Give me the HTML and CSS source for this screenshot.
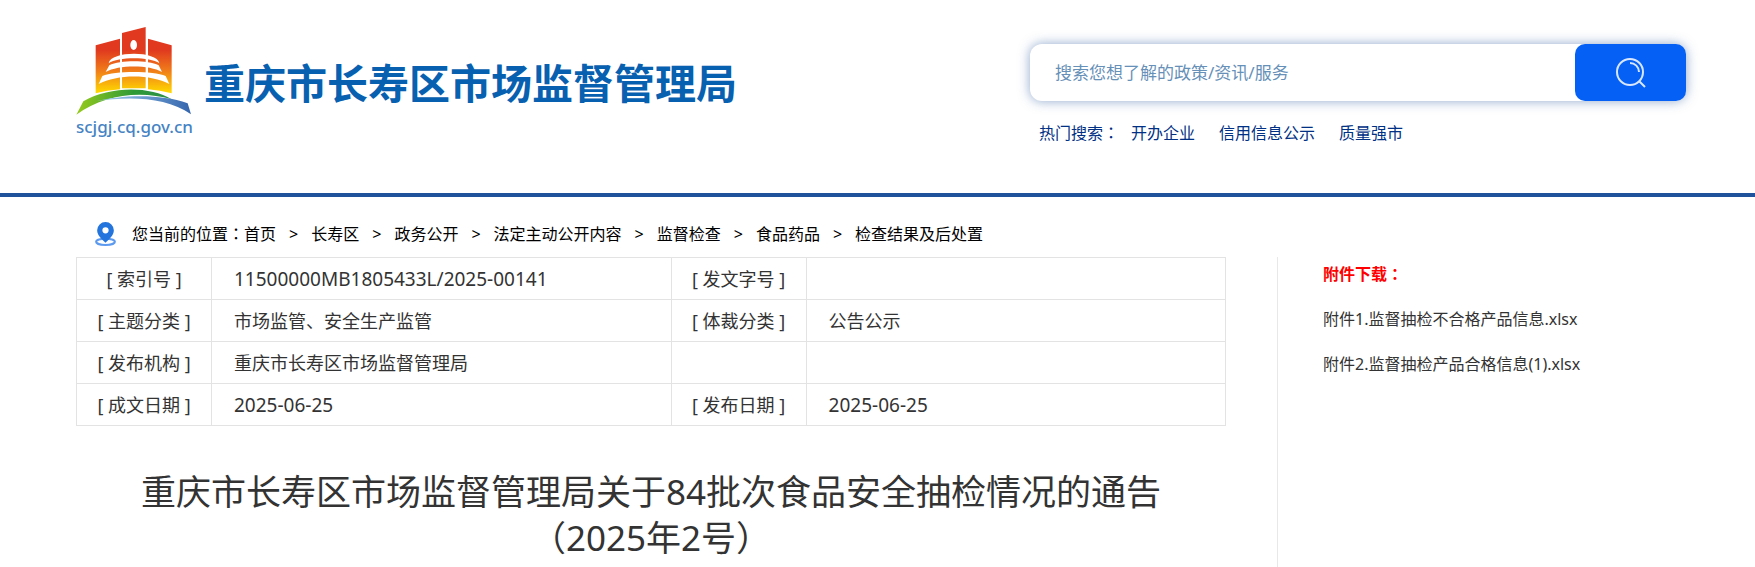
FILE: index.html
```html
<!DOCTYPE html>
<html lang="zh-CN">

<head>
  <meta charset="UTF-8" />
  <meta name="viewport" content="width=device-width, initial-scale=1.0" />
  <title>重庆市长寿区市场监督管理局</title>
  <link rel="stylesheet" href="styles.css">
</head>

<body>
  <!-- Header -->
  <header class="header">
    <a class="brand" href="#">
      <span class="brand-mark">
        <svg class="logo" viewBox="48 45 348 276" aria-hidden="true">
          <defs>
            <linearGradient id="tower" gradientUnits="userSpaceOnUse" x1="0" y1="50" x2="0" y2="250">
              <stop offset="0.35" stop-color="#e0391f" />
              <stop offset="0.65" stop-color="#f07a1a" />
              <stop offset="1" stop-color="#ffdc00" />
            </linearGradient>
            <linearGradient id="hill" x1="0" y1="0" x2="1" y2="0">
              <stop offset="0" stop-color="#97cb1c" />
              <stop offset="0.6" stop-color="#2f9a35" />
              <stop offset="1" stop-color="#2a8f4a" />
            </linearGradient>
            <linearGradient id="river" x1="0" y1="0" x2="1" y2="0">
              <stop offset="0" stop-color="#a5d3ee" />
              <stop offset="1" stop-color="#3465ae" />
            </linearGradient>
          </defs>
          <path fill="url(#tower)" d="M107 106L180 86V238Q140 241 107 250ZM186 69L257 51V235H186ZM264 86L335 106V250Q300 241 264 238Z" />
          <ellipse cx="221" cy="105" rx="10" ry="15" fill="#fff" />
          <g fill="#fff">
            <path d="M146 160C152 122 292 122 298 160C270 140 174 140 146 160Z" />
            <path d="M137 186L148 166C180 150 264 150 296 166L306 186C268 164 176 164 137 186Z" />
            <path d="M116 222L127 198C165 182 279 182 317 198L328 222C272 192 172 192 116 222Z" />
          </g>
          <path fill="url(#hill)" d="M49 314L70 274C150 228 270 228 335 268C240 240 130 254 49 314Z" />
          <path fill="url(#river)" d="M108 274C180 256 300 250 383 280L393 313C320 262 210 258 108 274Z" />
        </svg>
        <span class="domain">scjgj.cq.gov.cn</span>
      </span>
      <span class="brand-name">重庆市长寿区市场监督管理局</span>
    </a>

    <div class="search">
      <form class="search-box">
        <input type="text" class="search-input" aria-label="搜索" placeholder="搜索您想了解的政策/资讯/服务" />
        <button type="button" class="search-btn" aria-label="搜索">
          <svg viewBox="0 0 30 30" aria-hidden="true">
            <circle cx="14" cy="14" r="13" />
            <path d="M14 5a9 9 0 0 1 9 9M23 23l6 6" />
          </svg>
        </button>
      </form>
      <div class="hot">
        <span class="hot-label">热门搜索<span lang="zh-TW">：</span></span>
        <a href="#">开办企业</a>
        <a href="#">信用信息公示</a>
        <a href="#">质量强市</a>
      </div>
    </div>
  </header>

  <!-- Breadcrumb -->
  <nav class="crumbs">
    <svg class="pin" viewBox="0 0 20 23" aria-hidden="true">
      <ellipse cx="10" cy="19" rx="9" ry="3" />
      <path d="M10 0a8 8 0 0 1 8 8c0 5-5 9-8 12c-3-3-8-7-8-12a8 8 0 0 1 8-8zM10 5a3 3 0 0 0 0 6a3 3 0 0 0 0-6z" />
    </svg>
    <span>您当前的位置<span lang="zh-TW">：</span></span>
    <ol>
      <li><a href="#">首页</a></li>
      <li><a href="#">长寿区</a></li>
      <li><a href="#">政务公开</a></li>
      <li><a href="#">法定主动公开内容</a></li>
      <li><a href="#">监督检查</a></li>
      <li><a href="#">食品药品</a></li>
      <li><a href="#">检查结果及后处置</a></li>
    </ol>
  </nav>

  <div class="content">
    <main class="article">
      <table class="info">
        <colgroup>
          <col class="col-label">
          <col class="col-value">
          <col class="col-label">
          <col>
        </colgroup>
        <tr>
          <th>[ 索引号 ]</th>
          <td class="num">11500000MB1805433L/2025-00141</td>
          <th>[ 发文字号 ]</th>
          <td></td>
        </tr>
        <tr>
          <th>[ 主题分类 ]</th>
          <td>市场监管、安全生产监管</td>
          <th>[ 体裁分类 ]</th>
          <td>公告公示</td>
        </tr>
        <tr>
          <th>[ 发布机构 ]</th>
          <td>重庆市长寿区市场监督管理局</td>
          <th></th>
          <td></td>
        </tr>
        <tr>
          <th>[ 成文日期 ]</th>
          <td class="num">2025-06-25</td>
          <th>[ 发布日期 ]</th>
          <td class="num">2025-06-25</td>
        </tr>
      </table>
      <h1>重庆市长寿区市场监督管理局关于84批次食品安全抽检情况的通告<br>（2025年2号）</h1>
    </main>

    <!-- Attachments -->
    <aside class="files">
      <h2>附件下载<span lang="zh-TW">：</span></h2>
      <ul>
        <li><a href="#">附件1.监督抽检不合格产品信息.xlsx</a></li>
        <li><a href="#">附件2.监督抽检产品合格信息(1).xlsx</a></li>
      </ul>
    </aside>
  </div>
</body>

</html>
```
FILE: styles.css
```css
* {
  margin: 0;
  padding: 0;
  box-sizing: border-box;
}

body {
  min-height: 100vh;
  display: flex;
  flex-direction: column;
  background: #fff;
  color: #333;
  font-family: "Noto Sans", "Noto Sans CJK SC", sans-serif;
  font-size: 16px;
}

a {
  color: inherit;
  text-decoration: none;
}

ol,
ul {
  list-style: none;
}

/* Header */
.header {
  display: flex;
  justify-content: space-between;
  align-items: flex-start;
  padding: 25px 69px 48px 76px;
  border-bottom: 4px solid #20529c;
}

.brand {
  display: flex;
  align-items: center;
  gap: 10px;
}

.brand-mark {
  display: flex;
  flex-direction: column;
  width: 118px;
}

.logo {
  width: 116px;
  height: 92px;
}

.domain {
  color: #4583c4;
  font-size: 17px;
  font-weight: 500;
  line-height: 20px;
  white-space: nowrap;
}

.brand-name {
  padding-top: 4px;
  color: #0860b0;
  font-size: 41px;
  font-weight: 700;
  line-height: 60px;
  white-space: nowrap;
}

/* Search */
.search {
  width: 656px;
  padding-top: 19px;
}

.search-box {
  display: flex;
  height: 57px;
  border-radius: 12px;
  background: #fff;
  box-shadow: 0 0 12px rgba(32, 82, 156, 0.5);
}

.search-input {
  flex: 1;
  padding: 0 25px;
  border: none;
  border-radius: 12px;
  outline: none;
  background: transparent;
  font-family: inherit;
  font-size: 17px;
}

.search-input::placeholder {
  color: #6690b8;
}

.search-btn {
  width: 111px;
  border: none;
  border-radius: 10px;
  background: #0561f5;
  cursor: pointer;
}

.search-btn svg {
  width: 30px;
  height: 30px;
  vertical-align: middle;
  fill: none;
  stroke: #d8e6ff;
  stroke-width: 2;
}

.hot {
  display: flex;
  gap: 24px;
  padding: 20px 9px 0;
  color: #003084;
  line-height: 24px;
}

.hot-label {
  margin-right: -12px;
}

/* Breadcrumb */
.crumbs {
  display: flex;
  align-items: center;
  padding: 22px 95px 8px;
  color: #000;
  line-height: 30px;
}

.crumbs ol {
  display: flex;
}

.crumbs li + li::before {
  content: ">";
  margin: 0 13px;
}

.pin {
  width: 21px;
  height: 24px;
  margin-right: 16px;
}

.pin path {
  fill: #2374dd;
  fill-rule: evenodd;
}

.pin ellipse {
  fill: none;
  stroke: #5c9af0;
  stroke-width: 2;
}

/* Content */
.content {
  flex: 1;
  display: grid;
  grid-template-columns: 1150fr 402fr;
  gap: 51px;
  padding: 0 76px;
}

.info {
  width: 100%;
  table-layout: fixed;
  border-collapse: collapse;
  font-size: 18px;
}

.col-label {
  width: 135px;
}

.col-value {
  width: 40%;
}

.info th,
.info td {
  height: 42px;
  border: 1px solid #e3e3e3;
  font-weight: 400;
  line-height: 30px;
}

.info td {
  padding-left: 22px;
  text-align: left;
}

.info .num {
  font-size: 19px;
}

h1 {
  margin-top: 43px;
  font-size: 35px;
  font-weight: 400;
  line-height: 46px;
  text-align: center;
}

/* Attachments */
.files {
  padding-left: 45px;
  border-left: 1px solid #e8e8e8;
}

.files h2 {
  color: #f00;
  font-size: 16px;
  line-height: 34px;
}

.files li {
  margin-top: 11px;
  line-height: 34px;
}
```
